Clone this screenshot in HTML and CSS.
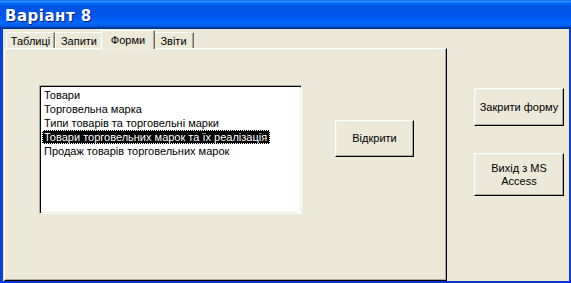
FILE: index.html
```html
<!DOCTYPE html>
<html>
<head>
<meta charset="utf-8">
<link rel="stylesheet" href="styles.css">
</head>
<body>
<div class="window">
  <div class="titlebar"><span class="title">Варіант 8</span></div>
  <div class="frame">
    <div class="tabctl">
      <div class="tabs">
        <div class="tab t1">Таблиці</div>
        <div class="tab t2">Запити</div>
        <div class="tab t3 active">Форми</div>
        <div class="tab t4">Звіти</div>
      </div>
      <div class="panel">
        <div class="listbox">
          <div class="item">Товари</div>
          <div class="item">Торговельна марка</div>
          <div class="item">Типи товарів та торговельні марки</div>
          <div class="item selected">Товари торговельних марок та їх реалізація</div>
          <div class="item">Продаж товарів торговельних марок</div>
        </div>
        <button class="btn open">Відкрити</button>
      </div>
    </div>
    <div class="side">
      <button class="btn close">Закрити форму</button>
      <button class="btn exit">Вихід з MS<br>Access</button>
    </div>
  </div>
</div>
</body>
</html>
```

FILE: styles.css
```css
html, body {
  margin: 0;
  padding: 0;
  background: #ece9d8;
}
.window {
  width: 571px;
  height: 283px;
  display: flex;
  flex-direction: column;
  font-family: "Liberation Sans", Arial, sans-serif;
  font-size: 11px;
  color: #000;
}
.titlebar {
  height: 29px;
  flex: none;
  display: flex;
  align-items: center;
  padding-left: 5px;
  background: linear-gradient(180deg, #0058ee 0%, #3593ff 4%, #288eff 6%, #127dff 8%, #036ffc 10%, #0262ee 14%, #0057e5 20%, #0054e3 24%, #0055eb 56%, #005bf5 66%, #026afe 76%, #0062ef 86%, #0052d6 92%, #0040ab 94%, #003092 100%);
}
.title {
  color: #fff;
  font-family: "DejaVu Sans", sans-serif;
  font-weight: bold;
  font-size: 15px;
  letter-spacing: 0.5px;
  text-shadow: 1px 1px #0a1883;
  margin-top: 2px;
}
.frame {
  flex: 1;
  display: flex;
  background: #ece9d8;
  border-left: 3px solid #0842de;
  border-right: 2px solid #0842de;
  border-bottom: 2px solid #0636c8;
}
.tabctl {
  width: 443px;
  margin-left: 1px;
  display: flex;
  flex-direction: column;
}
.tabs {
  height: 19px;
  display: flex;
  align-items: flex-end;
  padding-left: 2px;
}
.tab {
  height: 16px;
  box-sizing: border-box;
  border-top: 1px solid #fff;
  border-left: 1px solid #fff;
  border-right: 1px solid #716f64;
  box-shadow: inset -1px 0 #aca899;
  display: flex;
  align-items: center;
  justify-content: center;
  padding-top: 1px;
}
.t1 { width: 49px; }
.t2 { width: 48px; }
.t3 { width: 54px; }
.t4 { width: 41px; }
.tab.active {
  margin-left: -2px;
  margin-right: -2px;
  position: relative;
  z-index: 1;
  background: #ece9d8;
  margin-bottom: -1px;
  height: 19px;
  padding-bottom: 2px;
}
.panel {
  flex: 1;
  box-sizing: border-box;
  border-top: 1px solid #fff;
  border-left: 1px solid #fff;
  border-right: 1px solid #000;
  border-bottom: 1px solid #000;
  box-shadow: inset -1px -1px #aca899, inset 1px 1px #f1efe2;
  display: flex;
  align-items: flex-start;
  padding: 36px 0 0 34px;
}
.listbox {
  width: 263px;
  height: 129px;
  box-sizing: border-box;
  background: #fff;
  border-top: 1px solid #aca899;
  border-left: 1px solid #aca899;
  border-right: 1px solid #fff;
  border-bottom: 1px solid #fff;
  box-shadow: inset 1px 1px #000, inset -1px -1px #f1efe2;
  padding: 2px 0 0 2px;
}
.item {
  height: 14px;
  line-height: 14px;
  padding-left: 2px;
  white-space: nowrap;
}
.item.selected {
  width: fit-content;
  padding-right: 3px;
  background: #000;
  color: #fff;
  outline: 1px dotted #fff;
  outline-offset: -1px;
}
.btn {
  font-family: "Liberation Sans", Arial, sans-serif;
  font-size: 11px;
  color: #000;
  background: #ece9d8;
  box-sizing: border-box;
  border-top: 1px solid #fff;
  border-left: 1px solid #fff;
  border-right: 1px solid #000;
  border-bottom: 1px solid #000;
  box-shadow: inset -1px -1px #aca899, inset 1px 1px #f1efe2;
  padding: 0;
  line-height: 13px;
  text-align: center;
}
.open {
  width: 79px;
  height: 37px;
  margin: 35px 0 0 33px;
}
.side {
  display: flex;
  flex-direction: column;
  margin-left: 27px;
}
.close {
  width: 90px;
  height: 38px;
  margin-top: 59px;
}
.exit {
  width: 90px;
  height: 43px;
  margin-top: 27px;
}
```
